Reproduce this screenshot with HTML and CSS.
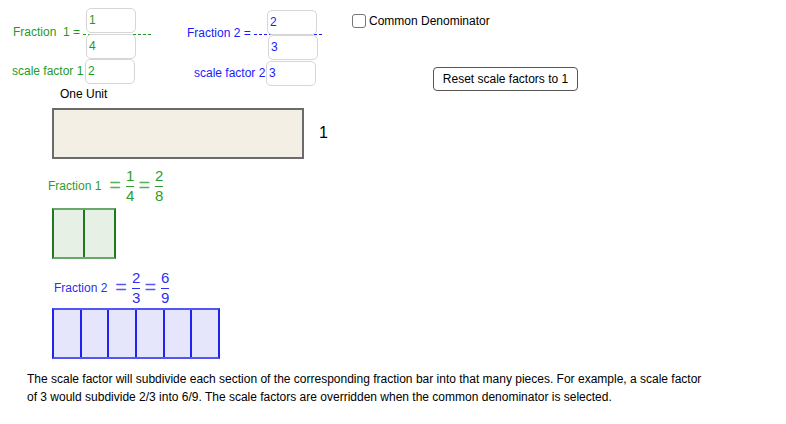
FILE: index.html
```html
<!DOCTYPE html>
<html lang="en">
<head>
    <meta charset="UTF-8">
    <title>Fraction Scale Factors</title>
    <link rel="stylesheet" href="styles.css">
</head>
<body>
    <div class="applet">
        <!-- fraction 1 inputs -->
        <div class="label green frac1-label">Fraction&nbsp; 1 =</div>
        <div class="dash green-dash dash1"></div>
        <div class="field green f1-num">1</div>
        <div class="field green f1-den">4</div>
        <div class="label green sf1-label">scale factor 1</div>
        <div class="field green f1-sf">2</div>

        <!-- fraction 2 inputs -->
        <div class="label blue frac2-label">Fraction 2 =</div>
        <div class="dash blue-dash dash2"></div>
        <div class="field blue f2-num">2</div>
        <div class="field blue f2-den">3</div>
        <div class="label blue sf2-label">scale factor 2</div>
        <div class="field blue f2-sf">3</div>

        <label class="check"><span class="box"></span>Common Denominator</label>
        <button class="reset">Reset scale factors to 1</button>

        <div class="label unit-label">One Unit</div>
        <div class="bar unit-bar"></div>
        <div class="unit-one">1</div>

        <div class="eq green eq1">
            <span class="eq-name">Fraction 1</span>
            <span class="op">=</span>
            <span class="frac"><span>1</span><span>4</span></span>
            <span class="op">=</span>
            <span class="frac"><span>2</span><span>8</span></span>
        </div>
        <div class="bar pieces green-bar bar1">
            <div></div><div></div>
        </div>

        <div class="eq blue eq2">
            <span class="eq-name">Fraction 2</span>
            <span class="op">=</span>
            <span class="frac"><span>2</span><span>3</span></span>
            <span class="op">=</span>
            <span class="frac"><span>6</span><span>9</span></span>
        </div>
        <div class="bar pieces blue-bar bar2">
            <div></div><div></div><div></div><div></div><div></div><div></div>
        </div>

        <p class="note">The scale factor will subdivide each section of the corresponding fraction bar into that many pieces. For example, a scale factor of 3 would subdivide 2/3 into 6/9. The scale factors are overridden when the common denominator is selected.</p>
    </div>
</body>
</html>
```

FILE: styles.css
```css
body {
    margin: 0;
    background: #fff;
    font-family: "Liberation Sans", Arial, sans-serif;
}
.applet {
    position: relative;
    width: 786px;
    height: 424px;
    overflow: hidden;
}
.applet > * {
    position: absolute;
}
.green {
    color: #1f9a1f;
}
.blue {
    color: #1a1aff;
}
.label {
    font-size: 12px;
    line-height: 14px;
    white-space: nowrap;
}
.frac1-label { left: 13px; top: 25px; }
.sf1-label { left: 12px; top: 64px; }
.frac2-label { left: 187px; top: 26px; }
.sf2-label { left: 194px; top: 66px; }
.unit-label { left: 60px; top: 87px; color: #000; }

.dash {
    height: 0;
    border-top: 1px dashed;
}
.green-dash { color: #1f9a1f; left: 83px; width: 68px; top: 34px; }
.blue-dash { color: #1a1aff; left: 254px; width: 68px; top: 34px; }

.field {
    box-sizing: border-box;
    width: 50px;
    height: 25px;
    border: 1px solid #d6d6d6;
    border-radius: 5px;
    background: #fff;
    font-size: 12px;
    padding: 4px 0 0 2px;
}
.f1-num { left: 86px; top: 8px; }
.f1-den { left: 86px; top: 34px; }
.f1-sf { left: 85px; top: 59px; }
.f2-num { left: 267px; top: 10px; }
.f2-den { left: 268px; top: 35px; }
.f2-sf { left: 266px; top: 61px; }

.check {
    left: 352px;
    top: 14px;
    display: flex;
    align-items: center;
    font-size: 12px;
    color: #000;
}
.check .box {
    width: 12px;
    height: 12px;
    border: 1px solid #767676;
    border-radius: 3px;
    margin-right: 3px;
}

.reset {
    left: 433px;
    top: 67px;
    width: 145px;
    height: 24px;
    background: #fff;
    border: 1px solid #555;
    border-radius: 4px;
    font-family: "Liberation Sans", Arial, sans-serif;
    font-size: 12px;
    color: #000;
    padding: 0;
}

.bar {
    box-sizing: border-box;
    height: 51px;
}
.unit-bar {
    left: 52px;
    top: 108px;
    width: 252px;
    background: #f3efe5;
    border: 2px solid #6b6b6b;
}
.unit-one {
    left: 319px;
    top: 124px;
    font-size: 16px;
    color: #000;
}

.pieces {
    display: flex;
}
.pieces div {
    flex: 1;
    border-left: 2px solid;
}
.pieces div:first-child {
    border-left: none;
}
.green-bar {
    left: 52px;
    top: 208px;
    width: 64px;
    background: #e6f0e4;
    color: #1f7a1f;
    border: 2px solid #1f7a1f;
    border-top-color: #6aa76a;
    border-bottom-color: #6aa76a;
}
.blue-bar {
    left: 52px;
    top: 308px;
    width: 168px;
    background: #e5e5fb;
    color: #2222ee;
    border: 2px solid #2222ee;
    border-top-color: #5555f2;
    border-bottom-color: #5555f2;
}

.eq {
    display: flex;
    align-items: center;
    white-space: nowrap;
}
.eq-name {
    font-size: 12px;
    margin-right: 4px;
}
.eq .op {
    font-size: 20px;
    margin: 0 5px 2px 4px;
    opacity: 0.8;
}
.frac {
    display: flex;
    flex-direction: column;
    align-items: center;
    font-size: 15px;
    line-height: 16px;
}
.frac span:first-child {
    border-bottom: 1px solid;
    padding: 0 0 2px;
}
.frac span:last-child {
    padding-top: 1px;
}
.eq1 { left: 48px; top: 168px; color: #2a9e2a; }
.eq2 { left: 54px; top: 270px; color: #2e2ef0; }

.note {
    left: 27px;
    top: 370px;
    width: 682px;
    margin: 0;
    font-size: 12px;
    line-height: 18px;
    color: #000;
}
```
